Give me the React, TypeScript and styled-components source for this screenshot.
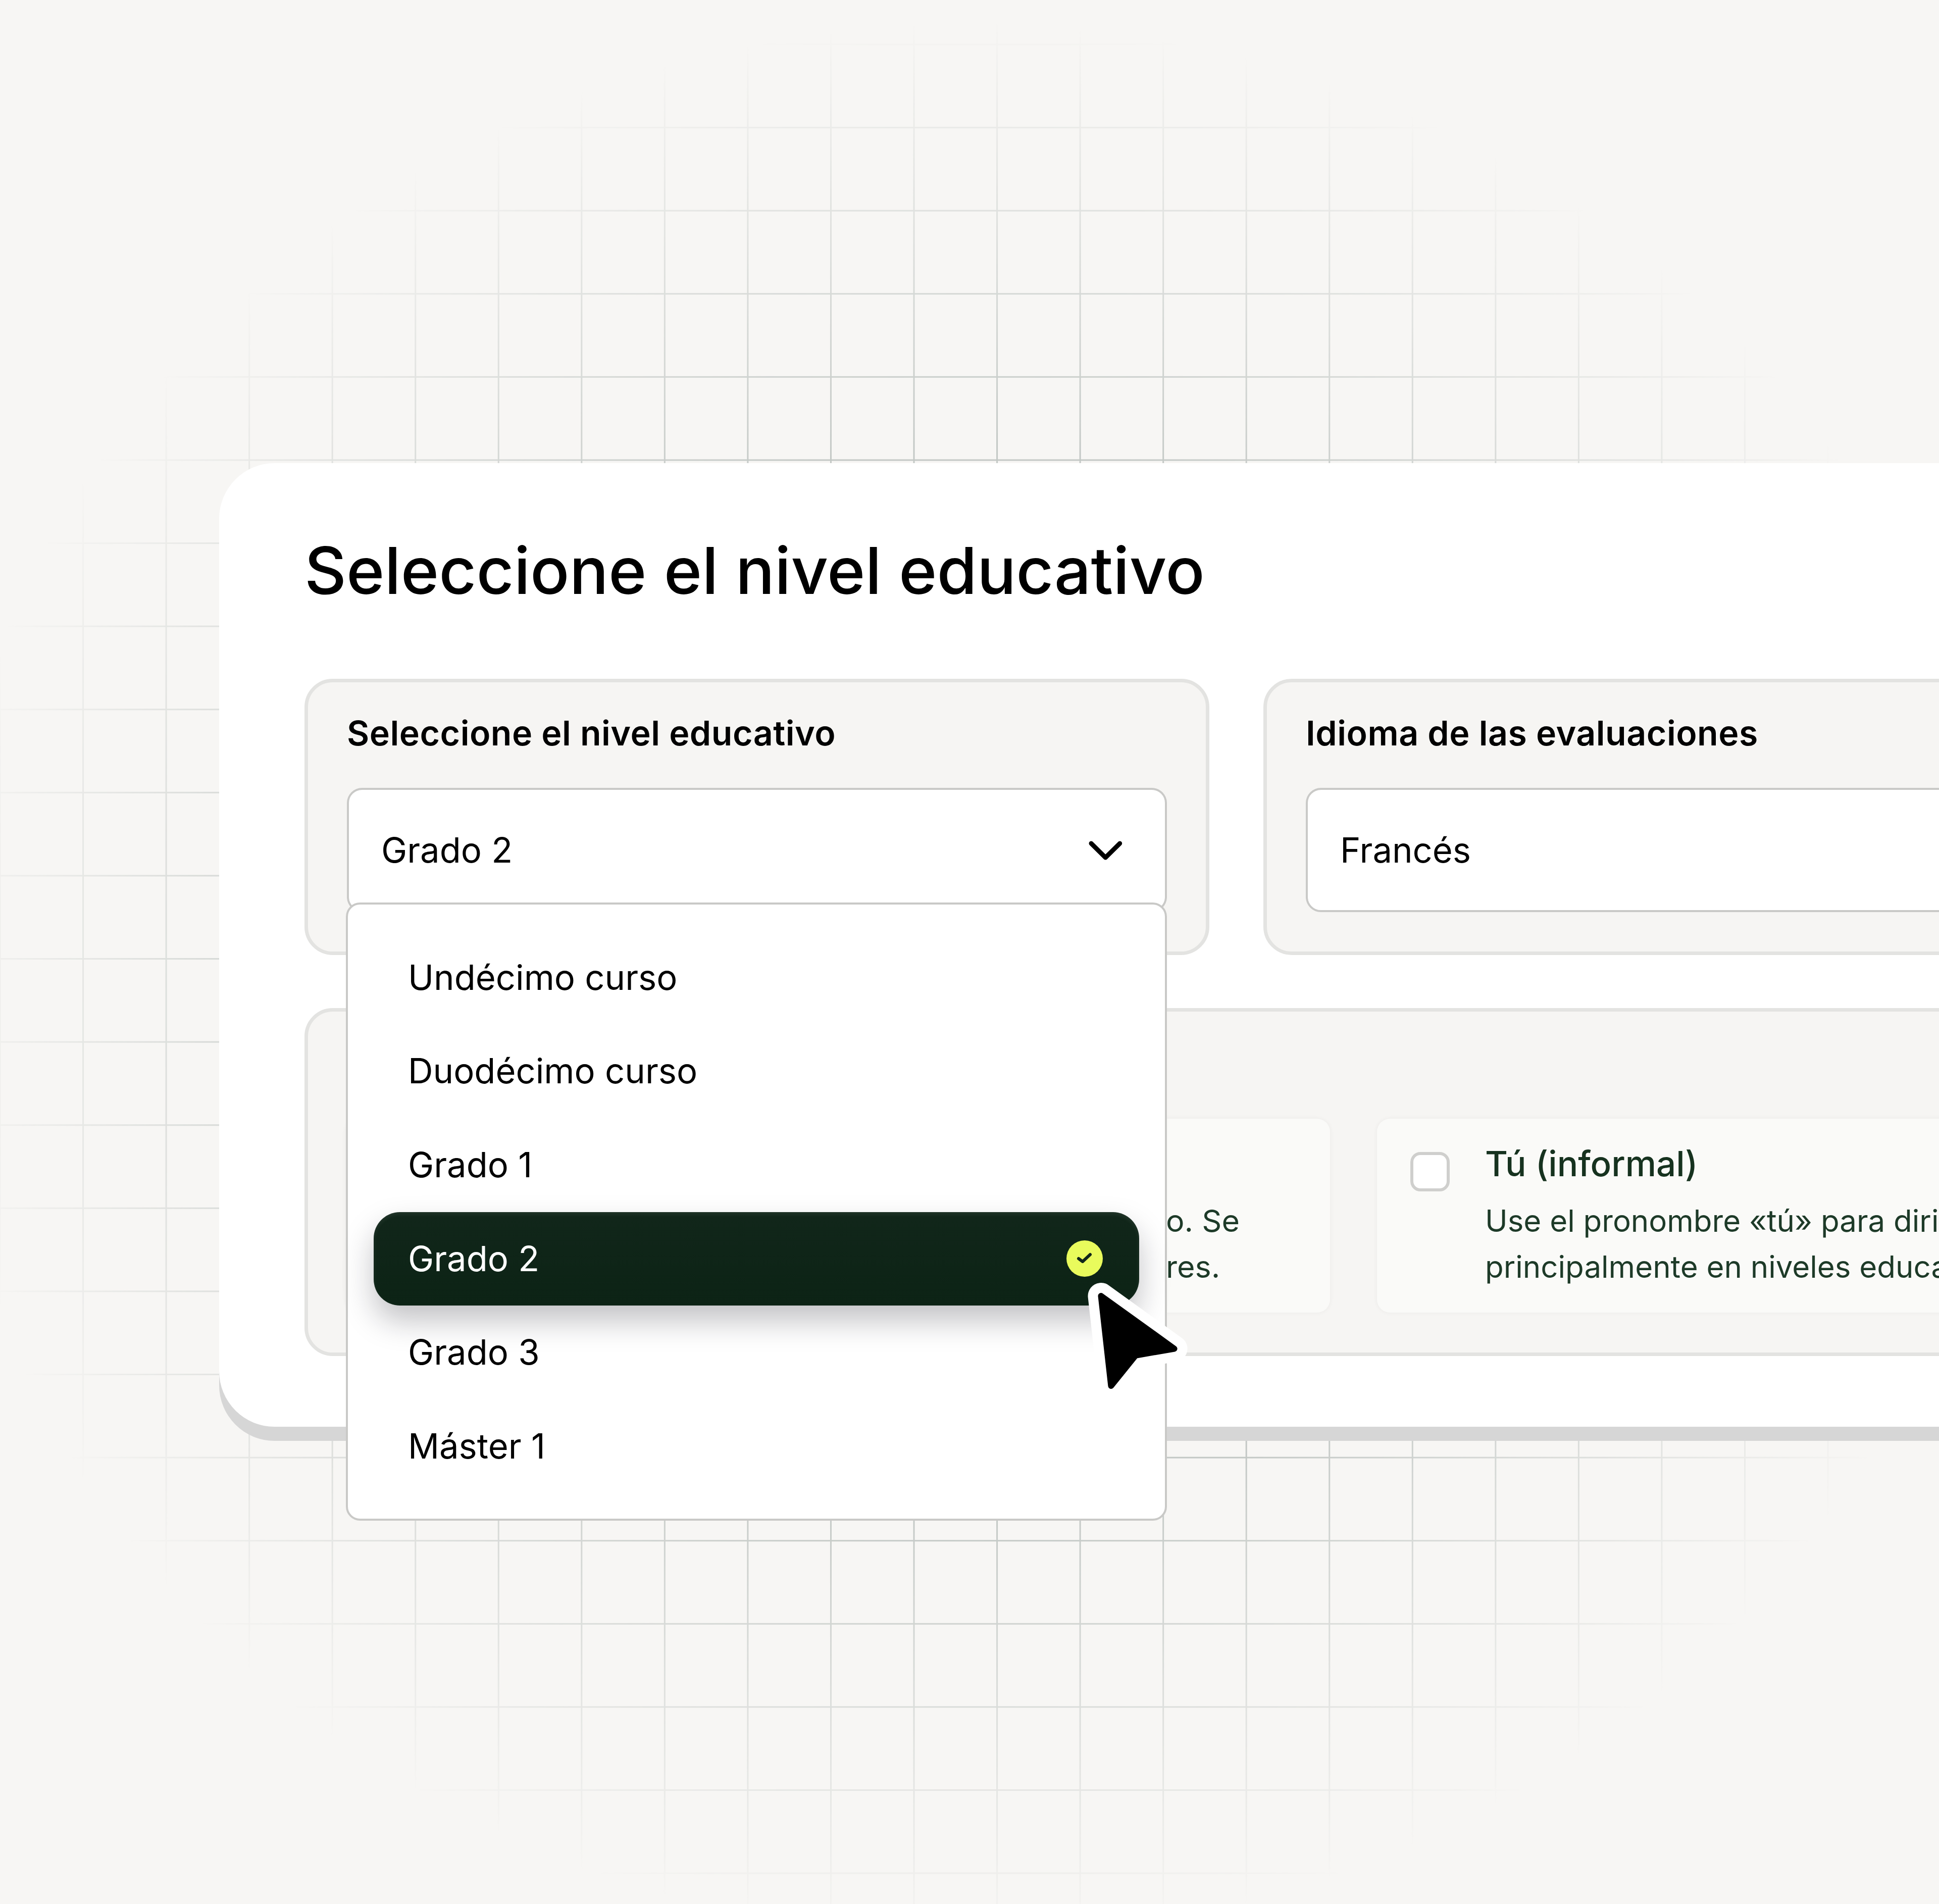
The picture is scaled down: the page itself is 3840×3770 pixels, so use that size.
import styled, { createGlobalStyle } from "styled-components";

const GlobalStyle = createGlobalStyle`
  html, body {
    margin: 0;
    padding: 0;
    background: #f7f6f4;
  }
  body {
    font-family: "Inter", "Liberation Sans", sans-serif;
    color: #000;
  }
`;

const grades = [
  "Undécimo curso",
  "Duodécimo curso",
  "Grado 1",
  "Grado 2",
  "Grado 3",
  "Máster 1",
];

const Chevron = () => (
  <svg width="70" height="44" viewBox="0 0 70 44" fill="none">
    <path
      d="M7 9 L35.3 37 L63.7 9"
      stroke="#000"
      strokeWidth="9"
      strokeLinecap="round"
      strokeLinejoin="round"
    />
  </svg>
);

const Cursor = () => (
  <svg width="240" height="270" viewBox="0 0 240 270">
    <path
      d="M40.5 46 L185.6 150.5 L109 163.8 L60.4 224 Z"
      fill="#fff"
      stroke="#fff"
      strokeWidth="52"
      strokeLinejoin="round"
    />
    <path
      d="M40.5 46 L185.6 150.5 L109 163.8 L60.4 224 Z"
      fill="#000"
      stroke="#000"
      strokeWidth="12"
      strokeLinejoin="round"
    />
  </svg>
);

export default function App() {
  return (
    <Page>
      <GlobalStyle />
      <Card>
        <Title>Seleccione el nivel educativo</Title>
        <TopRow>
          <Section>
            <Label>Seleccione el nivel educativo</Label>
            <SelectWrap>
              <Select>
                <span>Grado 2</span>
                <Chevron />
              </Select>
              <Dropdown>
                {grades.map((grade) => (
                  <Option key={grade} $selected={grade === "Grado 2"}>
                    <span>{grade}</span>
                    {grade === "Grado 2" && (
                      <CheckBadge>
                        <svg width="36" height="30" viewBox="0 0 36 30" fill="none">
                          <path
                            d="M6 15 L14 21 L29 7"
                            stroke="#10261a"
                            strokeWidth="6"
                            strokeLinecap="round"
                            strokeLinejoin="round"
                          />
                        </svg>
                      </CheckBadge>
                    )}
                  </Option>
                ))}
              </Dropdown>
            </SelectWrap>
          </Section>
          <Section>
            <Label>Idioma de las evaluaciones</Label>
            <Select>
              <span>Francés</span>
            </Select>
          </Section>
        </TopRow>
        <ToneSection>
          <ToneCard $end>
            <CoveredText>
              o. Se
              <br />
              res.
            </CoveredText>
          </ToneCard>
          <ToneCard>
            <Checkbox />
            <div>
              <ToneTitle>Tú (informal)</ToneTitle>
              <ToneText>
                Use el pronombre «tú» para dirigirse al alumno. Se usa
                <br />
                principalmente en niveles educativos inferiores.
              </ToneText>
            </div>
          </ToneCard>
        </ToneSection>
      </Card>
      <CursorWrap>
        <Cursor />
      </CursorWrap>
    </Page>
  );
}

const Page = styled.div`
  position: relative;
  width: 3840px;
  height: 3770px;
  overflow: hidden;
  background: #f7f6f4;
  padding: 917px 0 0 434px;
  box-sizing: border-box;

  // grid lines, fading out towards the edges
  &::before {
    content: "";
    position: absolute;
    inset: 0;
    background-image:
      linear-gradient(to right, #c3c8c5 3px, transparent 3px),
      linear-gradient(to bottom, #c3c8c5 3px, transparent 3px);
    background-size: 164.55px 164.6px;
    background-position: -1.5px 86.5px;
    mask-image: radial-gradient(ellipse 2060px 1900px at 50% 51.5%, #000 0, #000 56%, transparent 100%);
  }
`;

const Card = styled.div`
  position: relative;
  width: 4400px;
  box-sizing: border-box;
  padding: 138px 169px 140px;
  background: #fff;
  border-radius: 110px;
  box-shadow: 0 28px 0 #d6d6d6;
`;

const Title = styled.h1`
  margin: 0 0 139px;
  font-size: 128.5px;
  line-height: 150px;
  font-weight: 500;
  color: #000;
`;

const TopRow = styled.div`
  display: grid;
  grid-template-columns: 1792px 1792px;
  gap: 107px;
  margin-bottom: 105px;
`;

const Section = styled.div`
  box-sizing: border-box;
  padding: 61px 77px 78px;
  background: #f6f5f3;
  border: 7px solid #e3e3e1;
  border-radius: 56px;
`;

const Label = styled.div`
  font-size: 68px;
  line-height: 78px;
  font-weight: 565;
  letter-spacing: 0.5px;
  margin-bottom: 70px;
`;

const SelectWrap = styled.div`
  position: relative;
`;

const Select = styled.div`
  display: flex;
  align-items: center;
  justify-content: space-between;
  box-sizing: border-box;
  height: 246px;
  padding: 0 83px 0 64px;
  background: #fff;
  border: 4px solid #c9c9c7;
  border-radius: 30px;
  font-size: 68.7px;
  font-weight: 440;
  line-height: 80px;
`;

const Dropdown = styled.div`
  position: absolute;
  z-index: 2;
  top: 227px;
  left: -2px;
  right: 0;
  box-sizing: border-box;
  padding: 52px 51px 50px;
  background: #fff;
  border: 4px solid #c9c9c7;
  border-radius: 28px;
`;

const Option = styled.div<{ $selected?: boolean }>`
  display: flex;
  align-items: center;
  justify-content: space-between;
  box-sizing: border-box;
  height: 185.6px;
  padding: 0 72px 2px 68px;
  font-size: 68.7px;
  font-weight: 440;
  line-height: 80px;
  border-radius: 52px;
  color: ${(p) => (p.$selected ? "#fff" : "#000")};
  background: ${(p) =>
    p.$selected ? "linear-gradient(#11261a, #0c2315)" : "transparent"};
  box-shadow: ${(p) =>
    p.$selected
      ? "inset 0 4px 8px rgba(255,255,255,.08), 0 30px 60px rgba(20,20,30,.26)"
      : "none"};
`;

const CheckBadge = styled.span`
  display: flex;
  align-items: center;
  justify-content: center;
  width: 72px;
  height: 72px;
  border-radius: 50%;
  background: #e9fb5c;
`;

const ToneSection = styled.div`
  display: grid;
  grid-template-columns: 1949px 1949px;
  gap: 93px;
  padding: 212px 75px 79px;
  background: #f6f5f3;
  border: 7px solid #e3e3e1;
  border-radius: 56px;
`;

const ToneCard = styled.div<{ $end?: boolean }>`
  display: flex;
  justify-content: ${(p) => (p.$end ? "flex-end" : "flex-start")};
  gap: 70px;
  box-sizing: border-box;
  height: 384px;
  padding: 49px ${(p) => (p.$end ? "179px" : "60px")} 0 66px;
  background: #fafaf8;
  border-radius: 26px;
  box-shadow: 0 0 10px rgba(0, 0, 0, 0.05);
  white-space: nowrap;
`;

const Checkbox = styled.span`
  flex: none;
  box-sizing: border-box;
  width: 78px;
  height: 78px;
  margin-top: 17px;
  background: #fff;
  border: 6px solid #cfcfcd;
  border-radius: 20px;
`;

const ToneTitle = styled.div`
  font-size: 69px;
  line-height: 80px;
  font-weight: 500;
  color: #16321f;
  margin-bottom: 28px;
`;

const ToneText = styled.div`
  font-size: 60px;
  line-height: 91px;
  color: #1d3a28;
`;

// the part of the first card's text that sticks out past the open dropdown
const CoveredText = styled(ToneText)`
  margin-top: 108px;
  font-size: 61px;
`;

const CursorWrap = styled.div`
  position: absolute;
  z-index: 3;
  left: 2140px;
  top: 2520px;
  line-height: 0;
`;
